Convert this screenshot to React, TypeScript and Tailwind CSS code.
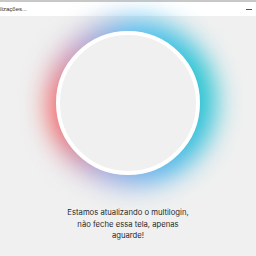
import React from 'react';

export default function App() {
  return (
    <div className="w-[256px] h-[256px] overflow-hidden bg-[#f0f0f0] flex flex-col font-['Inter',sans-serif]">
      {/* Window title bar */}
      <div className="h-[16px] shrink-0 bg-white border-t-[2px] border-[#c8c8c8] flex items-center justify-between overflow-hidden">
        <span className="-ml-[12px] text-[6px] text-[#333] whitespace-nowrap font-['Liberation_Sans',sans-serif]">
          Atualizações...
        </span>
        <span className="mr-[4px] w-[6px] h-px bg-[#555]" />
      </div>

      <div className="flex-1 flex flex-col items-center">
        {/* Spinner ring with glow */}
        <div className="relative mt-[15px] w-[144px] h-[144px]">
          <div className="absolute top-[-12px] bottom-[-10px] left-[-8px] right-[-16px] rounded-full blur-[13px] bg-[conic-gradient(from_0deg,#58bdf2_0deg,#22c4d0_70deg,#30c0da_120deg,#58b2ee_160deg,#a8a4dc_205deg,#f05c5c_250deg,#f06464_272deg,#bc9ccc_318deg,#58bdf2_360deg)]" />
          <div className="absolute inset-0 rounded-full bg-[#f0f0f0] border-[4px] border-white" />
        </div>

        <p className="mt-[32px] text-center text-[7.7px] leading-[11.5px] text-[#2a2a2a]">
          Estamos atualizando o multilogin,
          <br />
          não feche essa tela, apenas
          <br />
          aguarde!
        </p>
      </div>
    </div>
  );
}
